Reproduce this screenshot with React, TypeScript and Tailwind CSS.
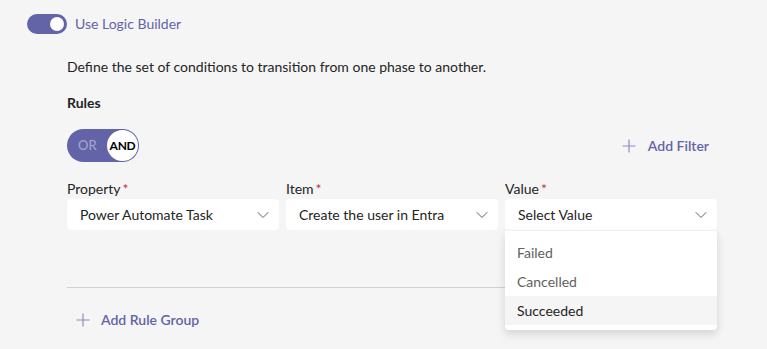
import React from "react";

function Chevron() {
  return (
    <svg width="12" height="12" viewBox="0 0 12 12" fill="none">
      <path d="M1 3.5 L6 8.5 L11 3.5" stroke="#616161" strokeWidth="1" strokeLinecap="round" strokeLinejoin="round" />
    </svg>
  );
}

function Plus() {
  return (
    <svg width="14" height="14" viewBox="0 0 14 14" fill="none">
      <path d="M7 0.5 V13.5 M0.5 7 H13.5" stroke="#8b8cc7" strokeWidth="1.2" />
    </svg>
  );
}

function Field({ label, value, children }: { label: string; value: string; children?: React.ReactNode }) {
  return (
    <div className="relative w-[212px] flex flex-col">
      <span className="h-[20px] leading-[20px] text-[#242424]">
        {label}
        <span className="text-[#c4314b] ml-[2px]">*</span>
      </span>
      <div className="h-[31px] bg-white rounded-[4px] flex items-center justify-between pl-[13px] pr-[10px]">
        <span className="text-[#242424]">{value}</span>
        <Chevron />
      </div>
      {children}
    </div>
  );
}

export default function App() {
  return (
    <div className="w-[767px] h-[349px] bg-[#f5f5f5] overflow-hidden text-[14px] text-[#242424] font-['Segoe_UI','Lato',sans-serif]">
      <div className="pt-[14px] pl-[27px] flex items-center gap-[8px]">
        <div className="w-[40px] h-[20px] rounded-full bg-[#6264a7] flex items-center justify-end pr-[3px]">
          <div className="w-[14px] h-[14px] rounded-full bg-white" />
        </div>
        <span className="text-[#6264a7] leading-[20px]">Use Logic Builder</span>
      </div>

      <div className="pl-[67px] w-[717px] flex flex-col">
        <p className="mt-[23px] leading-[20px]">Define the set of conditions to transition from one phase to another.</p>
        <p className="mt-[16px] leading-[20px] font-bold">Rules</p>

        <div className="mt-[16px] flex items-center justify-between">
          <div className="w-[72px] h-[33px] rounded-full bg-[#6264a7] flex items-center justify-between pl-[11px] pr-[1px]">
            <span className="text-[#a7a8d6] text-[13px]">OR</span>
            <div className="w-[31px] h-[31px] rounded-full bg-white flex items-center justify-center text-[12px] tracking-[-0.3px] font-bold text-black">
              AND
            </div>
          </div>
          <div className="flex items-center gap-[12px] pr-[8px] text-[#6264a7] font-semibold">
            <Plus />
            <span>Add Filter</span>
          </div>
        </div>

        <div className="mt-[17px] flex gap-[7px]">
          <Field label="Property" value="Power Automate Task" />
          <Field label="Item" value="Create the user in Entra" />
          <Field label="Value" value="Select Value">
            <div className="absolute left-0 top-[52px] w-[212px] bg-white rounded-b-[4px] pt-[7px] pb-[5px] shadow-[0_4px_10px_rgba(0,0,0,0.14)] z-10">
              <div className="h-[29px] flex items-center pl-[12px] text-[#616161]">Failed</div>
              <div className="h-[29px] flex items-center pl-[12px] text-[#616161]">Cancelled</div>
              <div className="h-[29px] flex items-center pl-[12px] bg-[#f5f5f5] text-[#242424]">Succeeded</div>
            </div>
          </Field>
        </div>

        <div className="mt-[57px] h-px bg-[#d1d1d1]" />

        <div className="mt-[22px] pl-[9px] flex items-center gap-[11px] text-[#6264a7] font-semibold leading-[20px]">
          <Plus />
          <span>Add Rule Group</span>
        </div>
      </div>
    </div>
  );
}
